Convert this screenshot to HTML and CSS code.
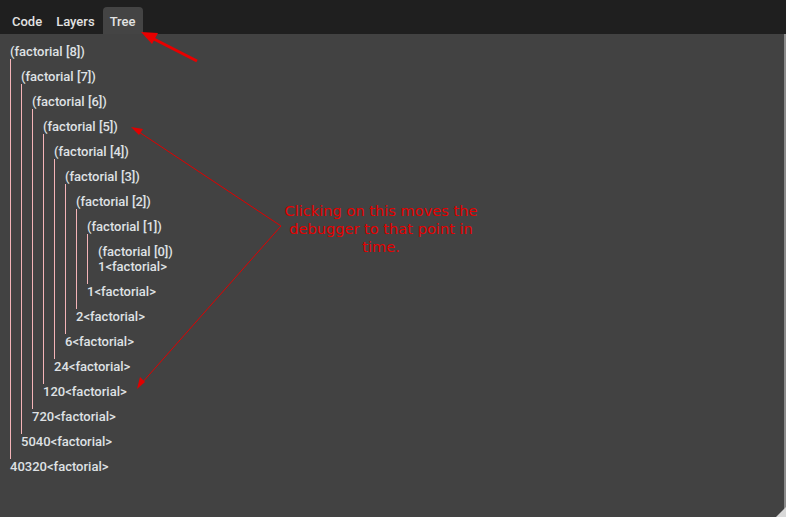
FILE: index.html
```html
<!DOCTYPE html>
<html>
<head>
<meta charset="utf-8">
<link rel="stylesheet" href="styles.css">
</head>
<body>
<div class="app">
  <div class="tabbar">
    <div class="tab">Code</div>
    <div class="tab">Layers</div>
    <div class="tab active">Tree</div>
  </div>
  <div class="content">
    <div class="node">
      <div class="label">(factorial [8])</div>
      <div class="kids">
        <div class="node">
          <div class="label">(factorial [7])</div>
          <div class="kids">
            <div class="node">
              <div class="label">(factorial [6])</div>
              <div class="kids">
                <div class="node">
                  <div class="label">(factorial [5])</div>
                  <div class="kids">
                    <div class="node">
                      <div class="label">(factorial [4])</div>
                      <div class="kids">
                        <div class="node">
                          <div class="label">(factorial [3])</div>
                          <div class="kids">
                            <div class="node">
                              <div class="label">(factorial [2])</div>
                              <div class="kids">
                                <div class="node">
                                  <div class="label">(factorial [1])</div>
                                  <div class="kids">
                                    <div class="node">
                                      <div class="label">(factorial [0])</div>
                                      <div class="label">1&lt;factorial&gt;</div>
                                    </div>
                                  </div>
                                  <div class="label">1&lt;factorial&gt;</div>
                                </div>
                              </div>
                              <div class="label">2&lt;factorial&gt;</div>
                            </div>
                          </div>
                          <div class="label">6&lt;factorial&gt;</div>
                        </div>
                      </div>
                      <div class="label">24&lt;factorial&gt;</div>
                    </div>
                  </div>
                  <div class="label">120&lt;factorial&gt;</div>
                </div>
              </div>
              <div class="label">720&lt;factorial&gt;</div>
            </div>
          </div>
          <div class="label">5040&lt;factorial&gt;</div>
        </div>
      </div>
      <div class="label">40320&lt;factorial&gt;</div>
    </div>
    <div class="note">Clicking on this moves the debugger to that point in time.</div>
    <svg class="arrows" width="786" height="517" viewBox="0 0 786 517">
      <line x1="197" y1="61" x2="150" y2="37" stroke="#e80000" stroke-width="3"/>
      <polygon points="141,32 158,33 152,44" fill="#e80000"/>
      <line x1="281" y1="226" x2="136" y2="130" stroke="#e00000" stroke-width="1"/>
      <polygon points="131,127 143,129 139,135" fill="#e00000"/>
      <line x1="281" y1="226" x2="141" y2="384" stroke="#e00000" stroke-width="1"/>
      <polygon points="137,389 140,377 145,382" fill="#e00000"/>
    </svg>
    <div class="grip"></div>
  </div>
</div>
</body>
</html>
```
FILE: styles.css
```css
html, body {
  margin: 0;
  padding: 0;
  width: 786px;
  height: 517px;
  overflow: hidden;
  background: #424242;
}
.app {
  display: flex;
  flex-direction: column;
  height: 517px;
  position: relative;
  font-family: Roboto, "Liberation Sans", sans-serif;
}
.tabbar {
  height: 34px;
  background: #1f1f1f;
  display: flex;
  align-items: flex-end;
  padding-left: 5px;
  box-sizing: border-box;
}
.tab {
  height: 27px;
  line-height: 27px;
  padding: 1px 7px 0;
  box-sizing: border-box;
  font-size: 13px;
  font-weight: 500;
  color: #e2e2e2;
  border-radius: 4px 4px 0 0;
}
.tab.active {
  background: #444444;
  margin-left: 1px;
}
.content {
  flex: 1;
  position: relative;
  padding: 10px 0 0 10px;
  border-right: 2px solid #8a8a8a;
  background: #424242;
}
.label {
  font-size: 13px;
  font-weight: 500;
  line-height: 15px;
  height: 15px;
  color: #dfe1e4;
  white-space: nowrap;
}
.kids {
  border-left: 1px solid #f4b4b8;
  padding: 10px 0 10px 10px;
}
.note {
  position: absolute;
  left: 269px;
  top: 168px;
  width: 224px;
  font-family: "DejaVu Sans", sans-serif;
  font-size: 14.6px;
  line-height: 18px;
  color: #e60000;
  text-align: center;
}
.arrows {
  position: absolute;
  left: 0;
  top: -34px;
  pointer-events: none;
}
.grip {
  position: absolute;
  right: -2px;
  bottom: 0;
  width: 0;
  height: 0;
  border-left: 10px solid transparent;
  border-bottom: 10px solid #d8d8d8;
}
```
